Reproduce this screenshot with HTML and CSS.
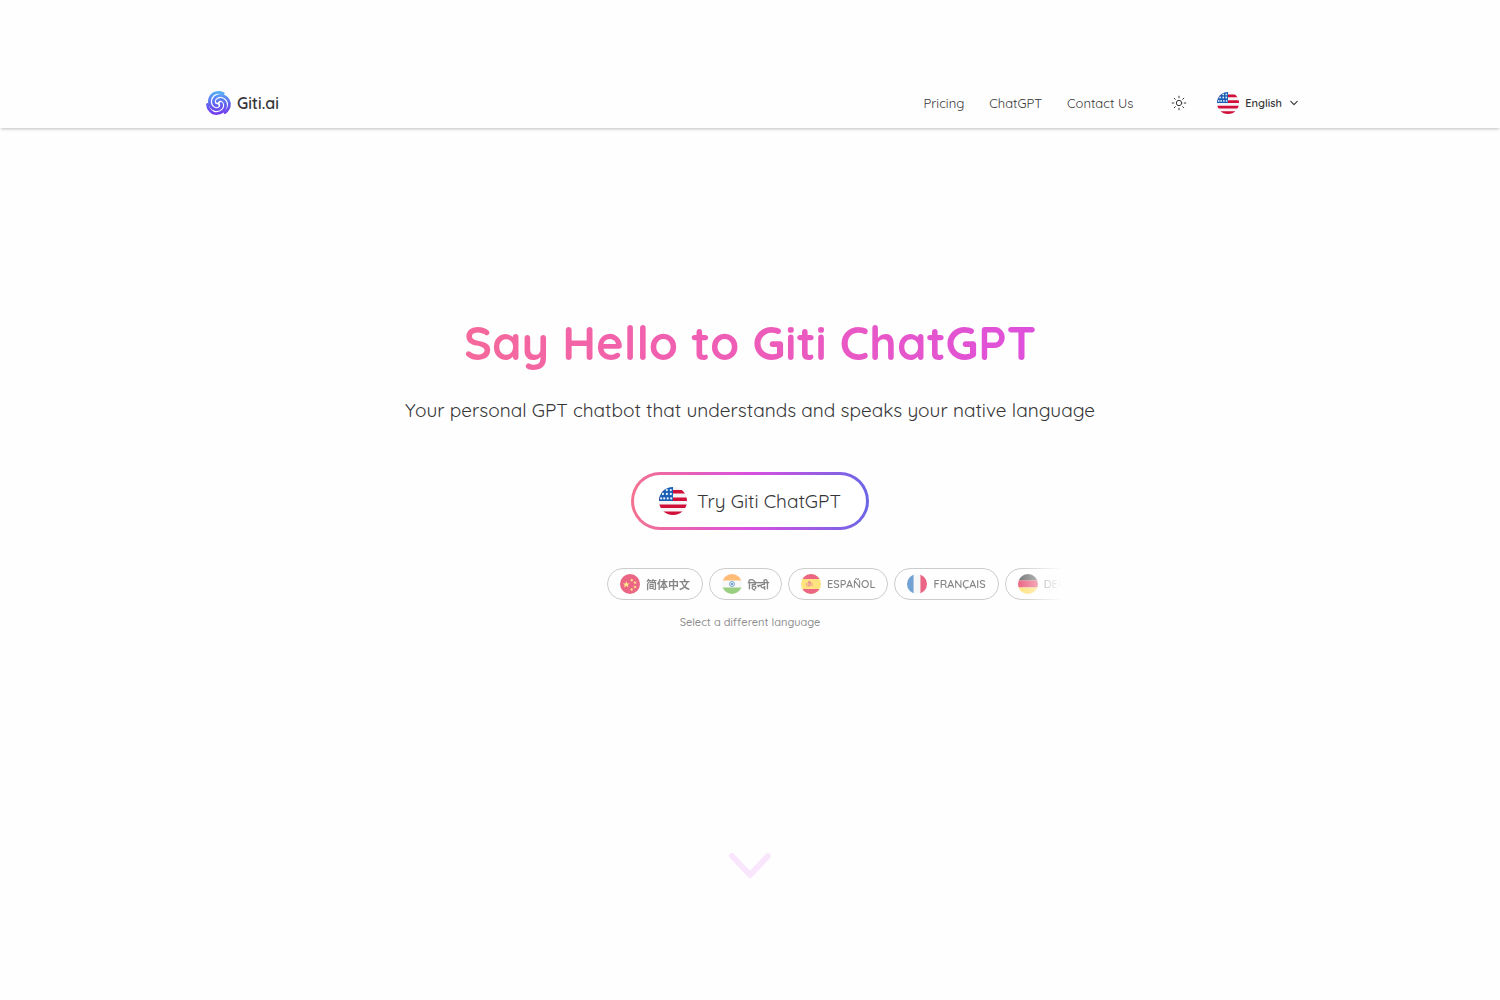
FILE: index.html
```html
<!DOCTYPE html>
<html lang="en">
<head>
  <meta charset="UTF-8" />
  <meta name="viewport" content="width=device-width, initial-scale=1.0" />
  <title>Giti.ai</title>
  <link rel="stylesheet" href="styles.css">
</head>
<body>
  <!-- shared flags -->
  <svg class="defs" width="0" height="0" aria-hidden="true">
    <defs>
      <clipPath id="round"><circle cx="32" cy="32" r="32"/></clipPath>
      <symbol id="flag-us" viewBox="0 0 64 64">
        <g clip-path="url(#round)">
          <path fill="#f5f3f5" d="M0 0h64v64H0z"/>
          <path fill="#d0103a" d="M0 7h64v8H0zM0 24h64v8H0zM0 40h64v8H0zM0 56h64v8H0z"/>
          <path fill="#1a5fb4" d="M0 0h32v32H0z"/>
          <g fill="#e4f2ff">
            <circle cx="18" cy="7" r="2.6"/><circle cx="27" cy="7" r="2.6"/>
            <circle cx="9" cy="16" r="2.6"/><circle cx="18" cy="16" r="2.6"/><circle cx="27" cy="16" r="2.6"/>
            <circle cx="5" cy="26" r="2.6"/><circle cx="12" cy="26" r="2.6"/><circle cx="20" cy="26" r="2.6"/><circle cx="28" cy="26" r="2.6"/>
          </g>
        </g>
      </symbol>
      <symbol id="flag-cn" viewBox="0 0 64 64">
        <g clip-path="url(#round)">
          <path fill="#dc0032" d="M0 0h64v64H0z"/>
          <path fill="#ffd23c" d="M20 22l3 8h8l-6 5 2 8-7-5-7 5 2-8-6-5h8z"/>
          <path fill="#ffd23c" d="M36 14l2 3 4-1-2 3 2 4-4-1-3 3v-4l-4-2 4-1zM47 22l2 3 4-1-2 3 2 4-4-1-3 3v-4l-4-2 4-1zM47 36l2 3 4-1-2 3 2 4-4-1-3 3v-4l-4-2 4-1zM36 44l2 3 4-1-2 3 2 4-4-1-3 3v-4l-4-2 4-1z"/>
        </g>
      </symbol>
      <symbol id="flag-in" viewBox="0 0 64 64">
        <g clip-path="url(#round)">
          <path fill="#f2f2f2" d="M0 0h64v64H0z"/>
          <path fill="#ff9020" d="M0 0h64v21H0z"/>
          <path fill="#58ad2c" d="M0 43h64v21H0z"/>
          <circle cx="32" cy="32" r="8" fill="none" stroke="#1463b8" stroke-width="3"/>
          <circle cx="32" cy="32" r="4" fill="#1463b8"/>
        </g>
      </symbol>
      <symbol id="flag-es" viewBox="0 0 64 64">
        <g clip-path="url(#round)">
          <path fill="#ffd129" d="M0 0h64v64H0z"/>
          <path fill="#dc0032" d="M0 0h64v16H0zM0 48h64v16H0z"/>
          <path fill="#d8563d" d="M17 28h3v12h-3zM22 27c0-6 10-6 10 0v9c0 6-10 6-10 0zM34 28h3v12h-3z"/>
          <path fill="#f5c4ae" d="M24 30h3v4h-3zM28 35h3v3h-3z"/>
        </g>
      </symbol>
      <symbol id="flag-fr" viewBox="0 0 64 64">
        <g clip-path="url(#round)">
          <path fill="#f2f2f2" d="M0 0h64v64H0z"/>
          <path fill="#1463b8" d="M0 0h21v64H0z"/>
          <path fill="#dc0032" d="M43 0h21v64H43z"/>
        </g>
      </symbol>
      <symbol id="flag-de" viewBox="0 0 64 64">
        <g clip-path="url(#round)">
          <path fill="#222" d="M0 0h64v21H0z"/>
          <path fill="#dc0032" d="M0 21h64v22H0z"/>
          <path fill="#ffd129" d="M0 43h64v21H0z"/>
        </g>
      </symbol>
    </defs>
  </svg>

  <header class="header">
    <div class="header-inner">
      <a class="brand" href="#">
        <svg class="logo" viewBox="0 0 48 48" aria-hidden="true">
          <defs>
            <linearGradient id="swirl" x1="0" y1="0" x2="0" y2="1">
              <stop offset="0" stop-color="#55b4f5"/>
              <stop offset=".55" stop-color="#625ff0"/>
              <stop offset="1" stop-color="#7a35ee"/>
            </linearGradient>
            <mask id="arms">
              <g fill="none" stroke="#fff" stroke-width="5.4" stroke-linecap="round">
                <path id="arm" d="M29 24A7 7 0 0 1 28.5 31.8A11 11 0 0 1 17.5 35.3A15 15 0 0 1 7 24A19 19 0 0 1 13.5 5.8A21 21 0 0 1 33 4.8"/>
                <use href="#arm" transform="rotate(120 24 24)"/>
                <use href="#arm" transform="rotate(240 24 24)"/>
              </g>
            </mask>
          </defs>
          <rect width="48" height="48" fill="url(#swirl)" mask="url(#arms)"/>
        </svg>
        <span>Giti.ai</span>
      </a>

      <nav class="nav">
        <a href="#">Pricing</a>
        <a href="#">ChatGPT</a>
        <a href="#">Contact Us</a>
      </nav>

      <button class="theme-btn" type="button" aria-label="Toggle theme">
        <svg viewBox="0 0 16 16" width="16" height="16" fill="none" stroke="currentColor" stroke-width="1" stroke-linecap="round">
          <circle cx="8" cy="8" r="2.7"/>
          <path d="M8 1.2v1.6M8 13.2v1.6M1.2 8h1.6M13.2 8h1.6M3.2 3.2l1.1 1.1M11.7 11.7l1.1 1.1M3.2 12.8l1.1-1.1M11.7 4.3l1.1-1.1"/>
        </svg>
      </button>

      <button class="lang-btn" type="button">
        <svg class="flag-md" aria-hidden="true"><use href="#flag-us"/></svg>
        <span>English</span>
        <svg class="caret" viewBox="0 0 8 8" fill="none" stroke="currentColor" stroke-width="1.1" stroke-linecap="round" stroke-linejoin="round" aria-hidden="true">
          <path d="M.8 2.3L4 5.6l3.2-3.3"/>
        </svg>
      </button>
    </div>
  </header>

  <main class="hero">
    <h1>Say Hello to Giti ChatGPT</h1>
    <p class="subtitle">Your personal GPT chatbot that understands and speaks your native language</p>

    <a class="cta" href="#">
      <svg class="flag-lg" aria-hidden="true"><use href="#flag-us"/></svg>
      <span>Try Giti ChatGPT</span>
    </a>

    <div class="languages">
      <button class="pill" type="button" lang="zh"><svg class="flag-sm" aria-hidden="true"><use href="#flag-cn"/></svg>简体中文</button>
      <button class="pill" type="button" lang="hi"><svg class="flag-sm" aria-hidden="true"><use href="#flag-in"/></svg>हिन्दी</button>
      <button class="pill" type="button" lang="es"><svg class="flag-sm" aria-hidden="true"><use href="#flag-es"/></svg>ESPAÑOL</button>
      <button class="pill" type="button" lang="fr"><svg class="flag-sm" aria-hidden="true"><use href="#flag-fr"/></svg>FRANÇAIS</button>
      <button class="pill" type="button" lang="de"><svg class="flag-sm" aria-hidden="true"><use href="#flag-de"/></svg>DEUTSCH</button>
    </div>
    <a class="more" href="#">Select a different language</a>

    <a class="scroll-down" href="#" aria-label="Scroll down">
      <svg viewBox="0 0 42 26" width="42" height="26" fill="none" stroke="#f9e6fd" stroke-width="6" stroke-linecap="round" stroke-linejoin="round">
        <path d="M3 3l18 19L39 3"/>
      </svg>
    </a>
  </main>
</body>
</html>
```

FILE: styles.css
```css
* {
  box-sizing: border-box;
}
body {
  margin: 0;
  padding-top: 78px;
  font-family: Quicksand, Lato, "Noto Sans CJK SC", sans-serif;
  color: #363638;
  background: #fefefe;
}
a {
  color: inherit;
  text-decoration: none;
}
button {
  padding: 0;
  border: none;
  background: none;
  font: inherit;
  color: inherit;
  cursor: pointer;
}
svg {
  display: block;
  flex: none;
}
.defs {
  position: absolute;
}

/* header */
.header {
  background: #fefefe;
  box-shadow: 0 2px 3px -1px rgba(0, 0, 0, 0.25);
}
.header-inner {
  display: flex;
  align-items: center;
  max-width: 1120px;
  height: 50px;
  margin: 0 auto;
  padding: 0 12px 0 16px;
}
.brand {
  display: flex;
  align-items: center;
  gap: 6px;
  margin-right: auto;
  font-size: 16px;
  font-weight: 600;
}
.logo {
  width: 25px;
  height: 25px;
}
.nav {
  display: flex;
  gap: 25px;
  font-size: 13px;
}
.theme-btn {
  margin: 0 30px 0 38px;
}
.lang-btn {
  display: flex;
  align-items: center;
  gap: 6px;
  font-size: 11px;
  font-weight: 600;
}
.flag-md {
  width: 22px;
  height: 22px;
}
.caret {
  width: 8px;
  height: 8px;
  margin-left: 2px;
}

/* hero */
.hero {
  display: flex;
  flex-direction: column;
  align-items: center;
  padding-top: 185px;
}
h1 {
  margin: 0;
  font-size: 47px;
  line-height: 60px;
  font-weight: 700;
  color: transparent;
  background: linear-gradient(90deg, #f5699b, #ee5cb8 50%, #de50dc);
  -webkit-background-clip: text;
  background-clip: text;
}
.subtitle {
  margin: 23px 0 48px;
  font-size: 19px;
  line-height: 28px;
}
.cta {
  display: flex;
  align-items: center;
  gap: 10px;
  height: 58px;
  padding: 0 25px;
  border: 3px solid transparent;
  border-radius: 29px;
  font-size: 19px;
  background: linear-gradient(#fff, #fff) padding-box, linear-gradient(90deg, #f4728f, #d94fe0 50%, #6b66e6) border-box;
}
.flag-lg {
  width: 28px;
  height: 28px;
}
.languages {
  display: flex;
  gap: 6px;
  width: 100%;
  max-width: 624px;
  margin: 38px 0 14px;
  padding-left: 169px;
  overflow: hidden;
  -webkit-mask-image: linear-gradient(90deg, transparent, #000 7%, #000 93%, transparent);
  mask-image: linear-gradient(90deg, transparent, #000 7%, #000 93%, transparent);
}
.pill {
  display: flex;
  flex: none;
  align-items: center;
  gap: 6px;
  height: 32px;
  padding: 0 12px;
  border: 1px solid #aaa;
  border-radius: 16px;
  font-size: 11px;
  font-weight: 600;
  opacity: 0.6;
}
.flag-sm {
  width: 20px;
  height: 20px;
}
.more {
  font-size: 11px;
  line-height: 16px;
  font-weight: 500;
  color: #8d8d8f;
}
.scroll-down {
  margin-top: 223px;
}
```
